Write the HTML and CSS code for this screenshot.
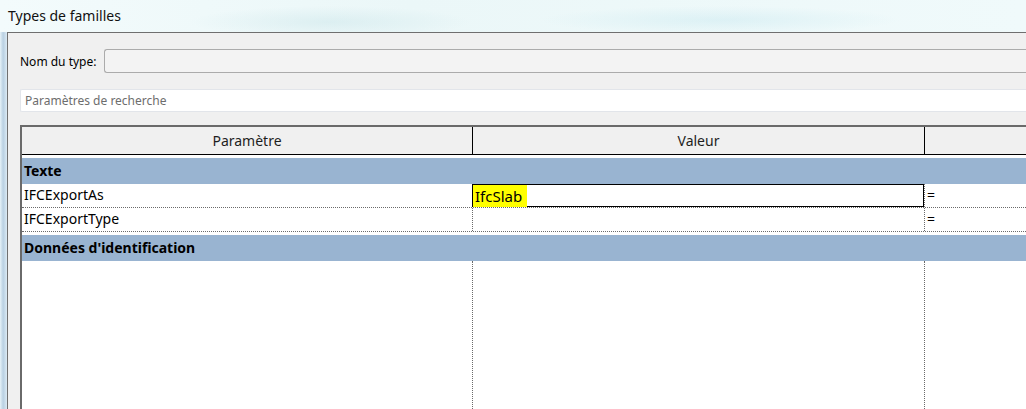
FILE: index.html
```html
<!DOCTYPE html>
<html lang="fr">
<head>
    <meta charset="UTF-8">
    <title>Types de familles</title>
    <link rel="stylesheet" href="styles.css">
</head>
<body>
    <div class="titlebar">
        <span class="title">Types de familles</span>
    </div>

    <div class="window">
        <div class="glass-edge"></div>
        <div class="dialog">
            <div class="name-row">
                <label class="label">Nom du type:</label>
                <div class="name-input"></div>
            </div>

            <div class="search-box">Paramètres de recherche</div>

            <div class="grid">
                <div class="head-row">
                    <div class="head-cell col1">Paramètre</div>
                    <div class="head-cell col2">Valeur</div>
                    <div class="head-cell col3"></div>
                </div>

                <div class="group-row">Texte</div>
                <div class="row">
                    <div class="cell col1">IFCExportAs</div>
                    <div class="cell col2 editing"><span class="hl">IfcSlab</span></div>
                    <div class="cell col3">=</div>
                </div>
                <div class="row">
                    <div class="cell col1">IFCExportType</div>
                    <div class="cell col2"></div>
                    <div class="cell col3">=</div>
                </div>

                <div class="group-row">Données d'identification</div>
                <div class="row filler">
                    <div class="cell col1"></div>
                    <div class="cell col2"></div>
                    <div class="cell col3"></div>
                </div>
            </div>
        </div>
    </div>
</body>
</html>
```

FILE: styles.css
```css
* {
    margin: 0;
    padding: 0;
    box-sizing: border-box;
}

body {
    width: 1026px;
    height: 409px;
    overflow: hidden;
    font-family: "Noto Sans", "Open Sans", sans-serif;
    font-size: 14px;
    color: #000;
    background: #eef8fa;
}

/* Title bar (blurred aero glass) */
.titlebar {
    height: 32px;
    display: flex;
    align-items: center;
    padding-left: 8px;
    background:
        radial-gradient(ellipse 140px 16px at 330px 22px, rgba(200, 228, 232, 0.45), transparent),
        radial-gradient(ellipse 180px 14px at 720px 20px, rgba(195, 230, 238, 0.4), transparent),
        linear-gradient(90deg, #f3fbfc 0%, #ebf7f8 40%, #f0fafb 100%);
}

.title {
    font-size: 14px;
    color: #111;
    padding-bottom: 2px;
}

.window {
    display: flex;
    height: 377px;
}

.glass-edge {
    width: 7px;
    background: linear-gradient(90deg, #e6f2f8 0%, #b9d0e2 45%, #dbeaf4 100%);
}

.dialog {
    flex: 1;
    background: #f0f0f0;
    border-left: 1px solid #6f6f6f;
    border-top: 1px solid #6f6f6f;
    padding: 16px 0 0 12px;
    display: flex;
    flex-direction: column;
}

/* Name row */
.name-row {
    display: flex;
    align-items: center;
    height: 24px;
}

.label {
    width: 84px;
    font-size: 12px;
}

.name-input {
    flex: 1;
    height: 24px;
    background: #f3f3f3;
    border: 1px solid #ababab;
    border-right: none;
    border-radius: 3px 0 0 3px;
}

.search-box {
    margin-top: 16px;
    height: 23px;
    background: #fff;
    border: 1px solid #e2e5ea;
    border-right: none;
    border-radius: 2px 0 0 2px;
    color: #6d6d6d;
    font-size: 12px;
    line-height: 21px;
    padding-left: 4px;
}

/* Property grid */
.grid {
    margin-top: 13px;
    flex: 1;
    background: #fff;
    border-left: 2px solid #6a6a6a;
    border-top: 2px solid #6a6a6a;
    display: flex;
    flex-direction: column;
}

.head-row {
    display: flex;
    height: 28px;
    background: #f0f0f0;
    border-bottom: 1px solid #000;
}

.head-cell {
    display: flex;
    align-items: center;
    justify-content: center;
    color: #1e1e1e;
}

.col1 {
    width: 450px;
    flex: none;
}

.col2 {
    width: 452px;
    flex: none;
}

.col3 {
    flex: 1;
}

.head-cell.col2,
.head-cell.col3 {
    border-left: 1px solid #000;
}

.group-row {
    margin-top: 3px;
    height: 26px;
    background: #99b4d1;
    font-weight: bold;
    line-height: 25px;
    padding-left: 2px;
}

.row {
    display: flex;
    height: 24px;
    border-bottom: 1px dotted #6a6a6a;
}

.cell {
    line-height: 22px;
    padding-left: 2px;
    white-space: nowrap;
}

.cell.col2,
.cell.col3 {
    border-left: 1px dotted #6a6a6a;
}

.cell.editing {
    border: 1px solid #000;
    padding-left: 0;
    height: 23px;
}

.hl {
    display: inline-block;
    background: #ffff00;
    font-size: 15px;
    padding: 0 5px 0 2px;
    line-height: 22px;
}

.row.filler {
    flex: 1;
    border-bottom: none;
}
```
